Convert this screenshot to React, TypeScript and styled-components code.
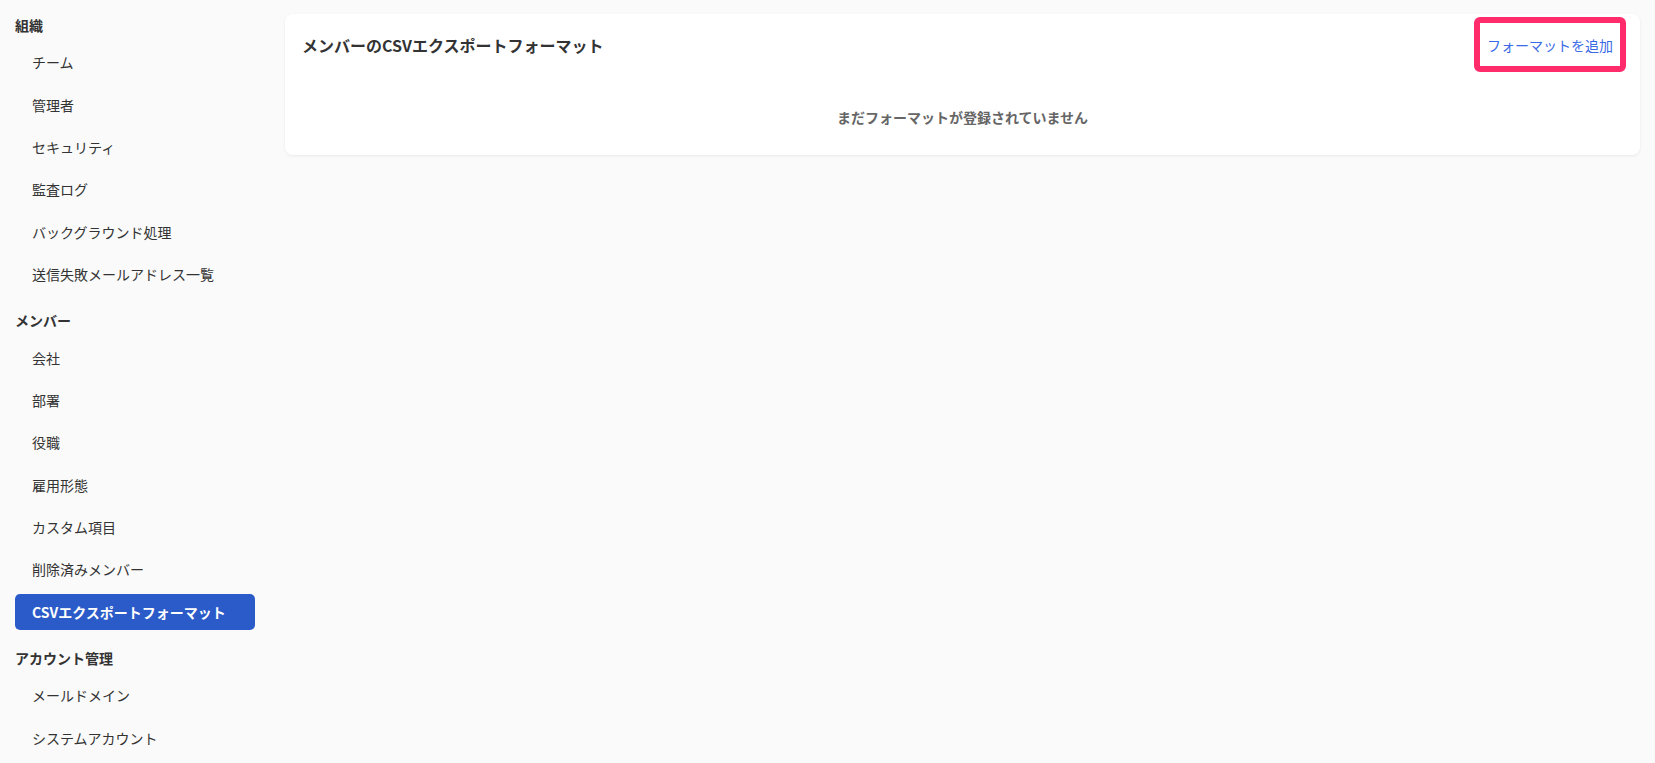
import React from 'react';
import styled, { createGlobalStyle } from 'styled-components';

const GROUPS = [
  {
    title: '組織',
    items: ['チーム', '管理者', 'セキュリティ', '監査ログ', 'バックグラウンド処理', '送信失敗メールアドレス一覧'],
  },
  {
    title: 'メンバー',
    items: ['会社', '部署', '役職', '雇用形態', 'カスタム項目', '削除済みメンバー', 'CSVエクスポートフォーマット'],
  },
  {
    title: 'アカウント管理',
    items: ['メールドメイン', 'システムアカウント'],
  },
];

const ACTIVE = 'CSVエクスポートフォーマット';

export default function App() {
  return (
    <>
      <GlobalStyle />
      <Page>
        <Sidebar>
          {GROUPS.map(group => (
            <Group key={group.title}>
              <GroupTitle>{group.title}</GroupTitle>
              {group.items.map(item => (
                <NavItem key={item} $active={item === ACTIVE}>
                  {item}
                </NavItem>
              ))}
            </Group>
          ))}
        </Sidebar>
        <Main>
          <Card>
            <CardHeader>
              <CardTitle>メンバーのCSVエクスポートフォーマット</CardTitle>
              <AddButton type="button">フォーマットを追加</AddButton>
            </CardHeader>
            <Empty>まだフォーマットが登録されていません</Empty>
          </Card>
        </Main>
      </Page>
    </>
  );
}

const GlobalStyle = createGlobalStyle`
  html, body {
    margin: 0;
    padding: 0;
    background: #fafafa;
    font-family: "Noto Sans CJK JP", "Noto Sans", sans-serif;
    color: #333;
  }
  * {
    box-sizing: border-box;
  }
`;

const Page = styled.div`
  display: flex;
  gap: 30px;
  padding: 14px 15px 0 15px;
  min-height: 763px;
`;

const Sidebar = styled.nav`
  width: 240px;
  flex-shrink: 0;
  display: flex;
  flex-direction: column;
  gap: 14px;
`;

const Group = styled.div`
  display: flex;
  flex-direction: column;
`;

const GroupTitle = styled.div`
  font-size: 14px;
  font-weight: 700;
  line-height: 22px;
  color: #333;
  margin-bottom: 5px;
`;

const NavItem = styled.div<{ $active?: boolean }>`
  height: 36.4px;
  margin: 3px 0;
  padding: 0 17px;
  display: flex;
  align-items: center;
  border-radius: 5px;
  font-size: 14px;
  white-space: nowrap;
  font-weight: ${props => (props.$active ? 700 : 400)};
  color: ${props => (props.$active ? '#ffffff' : '#333333')};
  background: ${props => (props.$active ? '#2a5bc8' : 'transparent')};
`;

const Main = styled.main`
  flex: 1;
  min-width: 0;
`;

const Card = styled.section`
  background: #ffffff;
  border-radius: 8px;
  box-shadow: 0 1px 3px rgba(0, 0, 0, 0.07);
`;

const CardHeader = styled.div`
  display: flex;
  align-items: center;
  justify-content: space-between;
  padding: 3px 14px 0 17px;
`;

const CardTitle = styled.h2`
  margin: 0;
  font-size: 16px;
  font-weight: 700;
  line-height: 24px;
  color: #333;
`;

const AddButton = styled.button`
  height: 55px;
  padding: 0 7px;
  border: 6px solid #ff2b6a;
  border-radius: 6px;
  background: #ffffff;
  color: #3a6ae6;
  font-family: inherit;
  font-size: 14px;
  cursor: pointer;
`;

const Empty = styled.p`
  margin: 0;
  padding: 35px 0 28px;
  text-align: center;
  font-size: 14px;
  line-height: 20px;
  font-weight: 700;
  color: #666;
`;
